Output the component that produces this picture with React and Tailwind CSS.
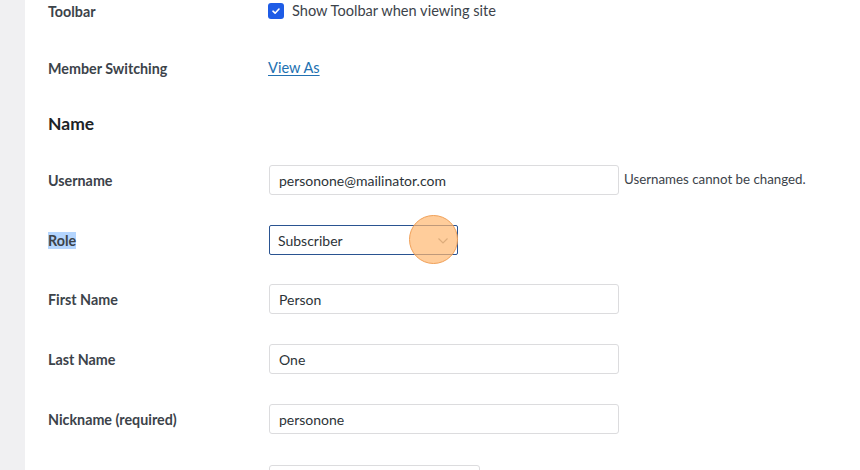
import React from "react";

const font = { fontFamily: "Lato, 'Noto Sans', sans-serif" };

function Row({ label, children, top, highlight }) {
  return (
    <div className={`flex items-center ${top}`}>
      <div className="w-[221px] shrink-0">
        <span className={`text-[14.3px] font-bold text-[#3c434a] ${highlight ? "bg-[#b4d5fe]" : ""}`}>{label}</span>
      </div>
      <div className="flex items-center">{children}</div>
    </div>
  );
}

function Input({ value, w = "w-[350px]" }) {
  return (
    <div className={`${w} h-[30px] border border-[#dcdcde] rounded-[3px] flex items-center px-[9px] text-[14px] text-[#2c3338] bg-white`}>
      {value}
    </div>
  );
}

export default function App() {
  return (
    <div className="w-[860px] h-[470px] flex bg-white overflow-hidden" style={font}>
      <div className="w-[25px] shrink-0 bg-[#f0f0f2]" />
      <div className="flex-1 pl-[23px] relative">
        <Row label="Toolbar" top="h-[22px]">
          <div className="flex items-center gap-[8px] -ml-[1px]">
            <div className="w-[16px] h-[16px] rounded-[3px] bg-[#1e5ce6] flex items-center justify-center">
              <svg width="10" height="10" viewBox="0 0 10 10" fill="none">
                <path d="M2 5.2 L4.1 7.2 L8 3" stroke="white" strokeWidth="1.6" strokeLinecap="round" strokeLinejoin="round" />
              </svg>
            </div>
            <span className="text-[14.6px] text-[#3c434a]">Show Toolbar when viewing site</span>
          </div>
        </Row>
        <Row label="Member Switching" top="h-[22px] mt-[35px]">
          <span className="text-[14.6px] text-[#2271b1] underline underline-offset-2 -ml-[1px]">View As</span>
        </Row>
        <div className="mt-[33px] h-[24px] flex items-center text-[17.5px] font-bold text-[#1d2327]">Name</div>
        <Row label="Username" top="h-[30px] mt-[29px]">
          <Input value="personone@mailinator.com" />
          <span className="ml-[5px] text-[13.3px] text-[#3c434a]">Usernames cannot be changed.</span>
        </Row>
        <Row label="Role" top="h-[30px] mt-[30px]" highlight>
          <div className="relative w-[189px] h-[30px] border border-[#2a5391] rounded-[2px] flex items-center px-[8px] text-[14px] text-[#2c3338]">
            Subscriber
            <svg className="absolute right-[8px] top-[11px]" width="12" height="8" viewBox="0 0 12 8" fill="none">
              <path d="M1.5 1.5 L6 6 L10.5 1.5" stroke="#8c8f94" strokeWidth="1.2" />
            </svg>
            <div className="absolute left-[139px] top-[-11px] w-[49px] h-[49px] rounded-full bg-[#ffb870]/70 border border-[#f0a058]" />
          </div>
        </Row>
        <Row label="First Name" top="h-[30px] mt-[29px]">
          <Input value="Person" />
        </Row>
        <Row label="Last Name" top="h-[30px] mt-[30px]">
          <Input value="One" />
        </Row>
        <Row label="Nickname (required)" top="h-[30px] mt-[30px]">
          <Input value="personone" />
        </Row>
        <Row label="" top="h-[30px] mt-[31px]">
          <Input value="" w="w-[211px]" />
        </Row>
      </div>
    </div>
  );
}
